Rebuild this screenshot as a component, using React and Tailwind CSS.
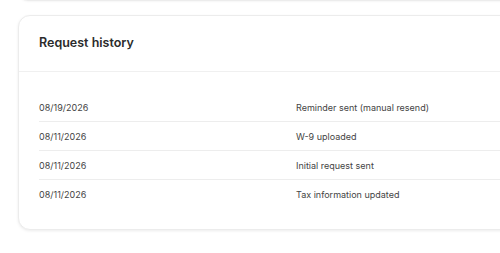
import React from 'react';

const rows = [
	{ date: '08/19/2026', event: 'Reminder sent (manual resend)' },
	{ date: '08/11/2026', event: 'W-9 uploaded' },
	{ date: '08/11/2026', event: 'Initial request sent' },
	{ date: '08/11/2026', event: 'Tax information updated' },
];

function App() {
	return (
		<div
			className="w-[500px] h-[253px] overflow-hidden bg-white"
			style={{ fontFamily: 'Inter, "Noto Sans", sans-serif' }}
		>
			<div className="pl-[18px]">
				{/* bottom of the card above */}
				<div className="-mt-[19px] h-[20px] w-[540px] rounded-xl border border-[#ececec] bg-white shadow-[0_1px_2px_rgba(0,0,0,0.04)]" />
				<div className="mt-[14px] w-[540px] rounded-xl border border-[#ececec] bg-white shadow-[0_1px_3px_rgba(0,0,0,0.08)]">
					<div className="h-[56px] flex items-center px-[20px] border-b border-[#f0f0f0]">
						<h2 className="text-[12.5px] font-semibold text-[#2b2b2b]">
							Request history
						</h2>
					</div>
					<div className="pl-[20px] pt-[21px] pb-[20px]">
						{rows.map((row, i) => (
							<div
								key={i}
								className={`grid grid-cols-[257px_1fr] h-[29px] items-center text-[9px] leading-none text-[#444] ${
									i < rows.length - 1 ? 'border-b border-[#ededed]' : ''
								}`}
							>
								<span>{row.date}</span>
								<span>{row.event}</span>
							</div>
						))}
					</div>
				</div>
			</div>
		</div>
	);
}

export default App;
